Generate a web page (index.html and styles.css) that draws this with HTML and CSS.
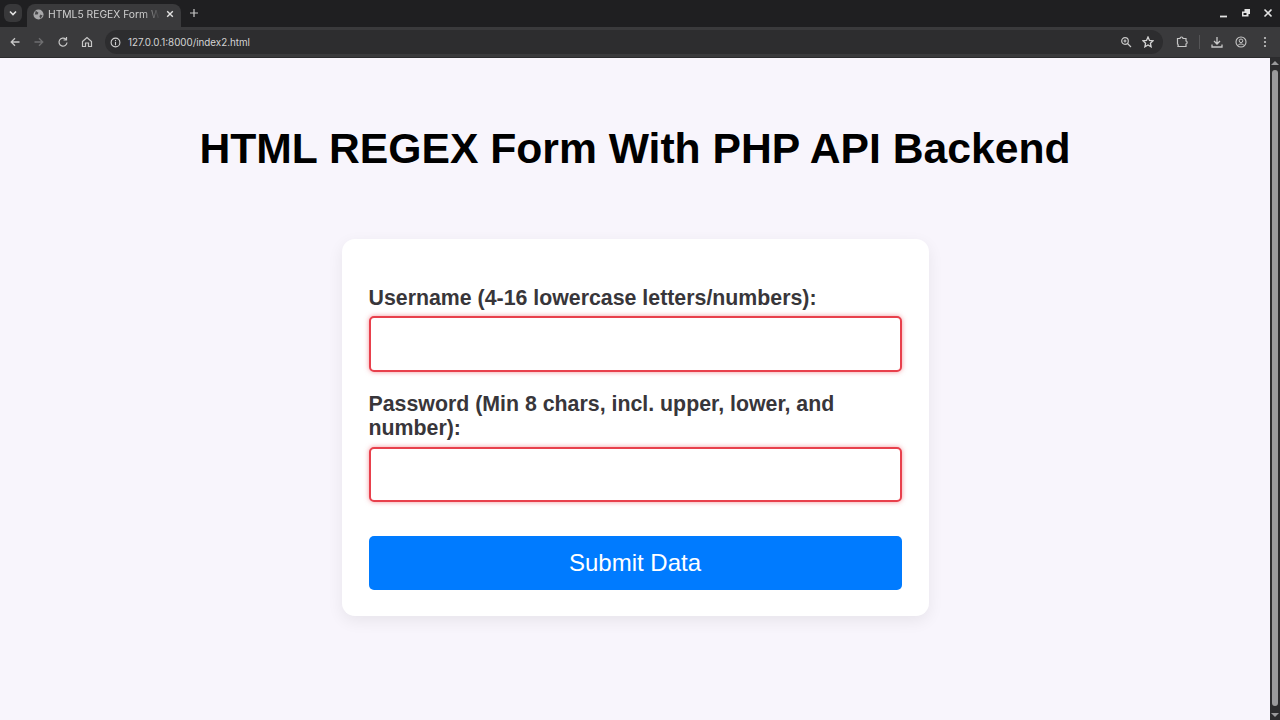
FILE: index.html
```html
<!DOCTYPE html>
<html>
<head>
    <meta charset="UTF-8">
    <title>HTML5 REGEX Form</title>
    <link rel="stylesheet" href="styles.css">
</head>
<body>
    <div class="tabstrip">
        <div class="tab-menu">
            <svg width="10" height="10" viewBox="0 0 10 10"><path d="M2 3.500 5 6.500 8 3.500" fill="none" stroke="#e3e3e3" stroke-width="1.6"/></svg>
        </div>
        <div class="tab">
            <svg class="favicon" width="11" height="11" viewBox="0 0 12 12"><circle cx="6" cy="6" r="5.500" fill="#a8a8aa"/><path d="M3 2 6 4 5 6 2 6M8 6 10.500 7 8 10.500 7 8Z" fill="#48484a"/></svg>
            <span class="tab-title">HTML5 REGEX Form W</span>
            <svg class="tab-close" width="10" height="10" viewBox="0 0 10 10"><path d="M2.200 2.200 7.800 7.800M7.800 2.200 2.200 7.800" stroke="#e3e3e3" stroke-width="1.400"/></svg>
        </div>
        <svg class="new-tab" width="10" height="10" viewBox="0 0 10 10"><path d="M5 1V9M1 5H9" stroke="#c8c8c8" stroke-width="1.200"/></svg>
        <div class="window-controls">
            <svg width="10" height="10" viewBox="0 0 10 10"><path d="M1 8.500H8" stroke="#e3e3e3" stroke-width="1.800"/></svg>
            <svg width="10" height="10" viewBox="0 0 10 10"><path d="M3.500 1H9V6H7.500V8.500H1V3.500H3.500Z" fill="#e3e3e3"/><path d="M2.500 5H5.500V7H2.500Z" fill="#1f1f21"/></svg>
            <svg width="10" height="10" viewBox="0 0 10 10"><path d="M1.500 1.500 8.500 8.500M8.500 1.500 1.500 8.500" stroke="#e3e3e3" stroke-width="1.600"/></svg>
        </div>
    </div>

    <div class="toolbar">
        <svg class="nav-icon" width="12" height="12" viewBox="0 0 12 12"><path d="M10.500 6H2M6 2.200 2.200 6 6 9.800" fill="none" stroke="#c8c8c8" stroke-width="1.300"/></svg>
        <svg class="nav-icon" width="12" height="12" viewBox="0 0 12 12"><path d="M1.500 6H10M6 2.200 9.800 6 6 9.800" fill="none" stroke="#6e6e70" stroke-width="1.300"/></svg>
        <svg class="nav-icon" width="12" height="12" viewBox="0 0 12 12"><path d="M10 6.500A4 4 0 1 1 8.800 3.200M9.500 1V4H6.500" fill="none" stroke="#c8c8c8" stroke-width="1.200"/></svg>
        <svg class="nav-icon" width="12" height="12" viewBox="0 0 12 12"><path d="M1.500 5.500 6 1.500 10.500 5.500V10.500H7.500V7H4.500V10.500H1.500Z" fill="none" stroke="#c8c8c8" stroke-width="1.200"/></svg>
        <div class="omnibox">
            <svg width="11" height="11" viewBox="0 0 12 12"><circle cx="6" cy="6" r="4.800" fill="none" stroke="#d0d0d0" stroke-width="1.200"/><path d="M6 5.500V9M6 3.200V4.500" stroke="#d0d0d0" stroke-width="1.200"/></svg>
            <span class="url">127.0.0.1:8000/index2.html</span>
            <svg class="omni-right" width="12" height="12" viewBox="0 0 12 12"><circle cx="5" cy="5" r="3.300" fill="none" stroke="#c8c8c8" stroke-width="1.200"/><path d="M7.500 7.500 11 11M3.500 5H6.500M5 3.500V6.500" stroke="#c8c8c8" stroke-width="1.200"/></svg>
            <svg width="12" height="12" viewBox="0 0 12 12"><path d="M6 1 7.500 4.400 11 4.800 8.400 7.200 9.100 10.800 6 9 2.900 10.800 3.600 7.200 1 4.800 4.500 4.400Z" fill="none" stroke="#d4d4d4" stroke-width="1.300"/></svg>
        </div>
        <svg class="extensions" width="12" height="12" viewBox="0 0 12 12"><path d="M1.500 2.500H4C4 .5 7 .5 7 2.500H10V5C11.500 5 11.500 8 10 8V10.500H2C2.500 9 2 8 1.500 8Z" fill="none" stroke="#c8c8c8" stroke-width="1.200"/></svg>
        <div class="divider"></div>
        <svg width="12" height="12" viewBox="0 0 12 12"><path d="M6 1V7.500M3 5 6 8 9 5M1 8.500V11H11V8.500" fill="none" stroke="#c8c8c8" stroke-width="1.300"/></svg>
        <svg width="12" height="12" viewBox="0 0 12 12"><circle cx="6" cy="6" r="5" fill="none" stroke="#c8c8c8" stroke-width="1.100"/><circle cx="6" cy="4.800" r="1.800" fill="none" stroke="#c8c8c8"/><path d="M2.800 9.500C4 7.500 8 7.500 9.200 9.500" fill="none" stroke="#c8c8c8"/></svg>
        <svg width="12" height="12" viewBox="0 0 12 12"><circle cx="6" cy="2" r="1.100" fill="#c8c8c8"/><circle cx="6" cy="6" r="1.100" fill="#c8c8c8"/><circle cx="6" cy="10" r="1.100" fill="#c8c8c8"/></svg>
    </div>

    <div class="viewport">
        <div class="page">
            <h1>HTML REGEX Form With PHP API Backend</h1>
            <form class="card" onsubmit="return false">
                <label class="first-label" for="username">Username (4-16 lowercase letters/numbers):</label>
                <input id="username" type="text">
                <label for="password">Password (Min 8 chars, incl. upper, lower, and number):</label>
                <input id="password" type="password">
                <button type="submit">Submit Data</button>
            </form>
        </div>
        <div class="scrollbar">
            <div class="scroll-arrow-up"></div>
            <div class="scroll-thumb"></div>
            <div class="scroll-arrow-down"></div>
        </div>
    </div>
</body>
</html>
```

FILE: styles.css
```css
html, body {
    height: 100%;
}
body {
    margin: 0;
    display: flex;
    flex-direction: column;
    overflow: hidden;
    font-family: 'Liberation Sans', Arial, sans-serif;
    background-color: #f8f5fc;
}
.tabstrip {
    height: 27px;
    flex: none;
    display: flex;
    align-items: flex-end;
    padding-left: 4px;
    background-color: #1f1f21;
}
.tab-menu {
    width: 18px;
    height: 18px;
    margin: 0 5px 5px 0;
    border-radius: 6px;
    display: flex;
    align-items: center;
    justify-content: center;
    background-color: #38383a;
}
.tab {
    width: 154px;
    height: 23px;
    box-sizing: border-box;
    padding: 0 6px 3px 6px;
    display: flex;
    align-items: center;
    border-radius: 8px 8px 0 0;
    background-color: #3a3a3c;
}
.favicon {
    margin-right: 4px;
    flex: none;
}
.tab-title {
    flex: 1;
    white-space: nowrap;
    font-family: 'Inter', sans-serif;
    font-size: 10.300px;
    color: #d0d0d0;
    -webkit-mask-image: linear-gradient(to right, #000 84%, transparent 99%);
    mask-image: linear-gradient(to right, #000 84%, transparent 99%);
}
.tab-close {
    flex: none;
    margin-left: 4px;
}
.new-tab {
    margin: 0 0 9px 8px;
}
.window-controls {
    margin-left: auto;
    padding: 0 7px 9px 0;
    display: flex;
    gap: 12px;
}
.toolbar {
    height: 31px;
    flex: none;
    box-sizing: border-box;
    padding: 0 9px;
    display: flex;
    align-items: center;
    gap: 12px;
    background-color: #3a3a3c;
    border-bottom: 1px solid #2b2b2d;
}
.nav-icon {
    flex: none;
}
.omnibox {
    width: 1058px;
    height: 24px;
    flex: none;
    box-sizing: border-box;
    padding: 0 9px 0 5px;
    display: flex;
    align-items: center;
    gap: 10px;
    border-radius: 12px;
    background-color: #2d2d2f;
}
.url {
    margin-left: -3px;
    font-family: 'Inter', sans-serif;
    font-size: 9.800px;
    color: #d4d4d4;
}
.omni-right {
    margin-left: auto;
}
.extensions {
    margin-left: 1px;
}
.divider {
    width: 1px;
    height: 14px;
    background-color: #555557;
    margin: 0 -1px;
}
.viewport {
    flex: 1;
    display: flex;
    min-height: 0;
}
.page {
    flex: 1;
    display: flex;
    flex-direction: column;
    align-items: center;
}
h1 {
    margin: 66px 0 66px;
    font-size: 42.670px;
    line-height: 49px;
    color: #000;
}
.card {
    width: 587px;
    box-sizing: border-box;
    padding: 47px 27px 26px;
    border-radius: 13px;
    background-color: #fff;
    box-shadow: 0 5px 16px rgba(0, 0, 0, 0.07);
}
label {
    display: block;
    margin-bottom: 7px;
    font-size: 21.330px;
    line-height: 24px;
    font-weight: bold;
    color: #38363a;
}
.first-label {
    margin-bottom: 6px;
}
input {
    display: block;
    width: 100%;
    height: 56px;
    box-sizing: border-box;
    margin-bottom: 20px;
    border: 2px solid #e8404c;
    border-radius: 5px;
    background-color: #fff;
    box-shadow: 0 0 5px rgba(232, 64, 76, 0.55);
    outline: none;
}
#password {
    height: 55px;
}
button {
    display: block;
    width: 100%;
    height: 54px;
    margin-top: 34px;
    border: none;
    border-radius: 5px;
    background-color: #007bff;
    color: white;
    font-family: 'Liberation Sans', Arial, sans-serif;
    font-size: 24px;
}
.scrollbar {
    width: 10px;
    flex: none;
    box-sizing: border-box;
    padding: 3px 0;
    background-color: #2c2c2e;
    display: flex;
    flex-direction: column;
    align-items: center;
}
.scroll-arrow-up, .scroll-arrow-down {
    width: 0;
    height: 0;
    flex: none;
    border-left: 4px solid transparent;
    border-right: 4px solid transparent;
}
.scroll-arrow-up {
    border-bottom: 4px solid #9a9a9c;
}
.scroll-arrow-down {
    border-top: 4px solid #9a9a9c;
}
.scroll-thumb {
    width: 6px;
    flex: 1;
    margin: 5px 0 7px;
    border-radius: 3px;
    background-color: #9a9a9c;
}
```
